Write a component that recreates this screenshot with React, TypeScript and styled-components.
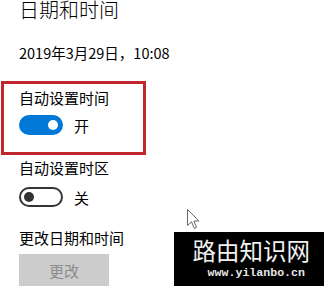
import React from 'react';
import styled, { createGlobalStyle } from 'styled-components';

const GlobalStyle = createGlobalStyle`
  html, body {
    margin: 0;
    padding: 0;
    background: #fff;
  }
  body {
    font-family: 'Noto Sans CJK SC', 'Noto Sans', sans-serif;
    color: #000;
  }
`;

const Page = styled.div`
  position: relative;
  width: 324px;
  height: 286px;
  overflow: hidden;
  padding-left: 19px;
  padding-top: 1px;
  box-sizing: border-box;
`;

const Title = styled.h1`
  margin: -3px 0 0;
  font-size: 20px;
  font-weight: 300;
  line-height: 24px;
  height: 24px;
`;

const DateLine = styled.div`
  margin-top: 21px;
  font-size: 14.5px;
  line-height: 20px;
`;

const Highlight = styled.div`
  margin: 18px 0 0 -18px;
  width: 145px;
  box-sizing: border-box;
  border: 3px solid #c1262d;
  padding: 4px 0 17px 15px;
`;

const Label = styled.div<{ $gap?: number }>`
  margin-top: ${(p) => p.$gap ?? 0}px;
  font-size: 15px;
  line-height: 20px;
`;

const ToggleRow = styled.div<{ $gap: number }>`
  display: flex;
  align-items: center;
  gap: 11px;
  margin-top: ${(p) => p.$gap}px;
  height: 20px;
  font-size: 15px;
`;

const Track = styled.div<{ $on: boolean }>`
  width: 44px;
  height: 20px;
  box-sizing: border-box;
  border-radius: 10px;
  border: 2px solid ${(p) => (p.$on ? '#0078d7' : '#333')};
  background: ${(p) => (p.$on ? '#0078d7' : '#fff')};
  display: flex;
  align-items: center;
  justify-content: ${(p) => (p.$on ? 'flex-end' : 'flex-start')};
  padding: 0 3px;
`;

const Knob = styled.div<{ $on: boolean }>`
  width: 10px;
  height: 10px;
  border-radius: 50%;
  background: ${(p) => (p.$on ? '#fff' : '#333')};
`;

const Button = styled.div`
  margin-top: 6px;
  width: 90px;
  height: 32px;
  background: #cccccc;
  color: #8c8c8c;
  font-size: 15px;
  display: flex;
  align-items: center;
  justify-content: center;
`;

const Watermark = styled.div`
  position: absolute;
  left: 174px;
  top: 232px;
  right: 0;
  bottom: 0;
  background: #000;
  color: #f2f2f2;
  display: flex;
  flex-direction: column;
  align-items: flex-end;
  padding-right: 14px;
`;

const WatermarkTitle = styled.div`
  font-size: 23.5px;
  line-height: 24px;
  height: 24px;
  margin-top: 6px;
`;

const WatermarkUrl = styled.div`
  font-family: 'Liberation Mono', 'DejaVu Sans Mono', monospace;
  font-size: 11.6px;
  font-weight: 700;
  line-height: 13px;
  margin-top: 4px;
  margin-right: 5px;
  color: #e8e8e8;
`;

const Cursor = styled.svg`
  position: absolute;
  left: 187px;
  top: 209px;
`;

function Toggle({ on, text, gap }: { on: boolean; text: string; gap: number }) {
  return (
    <ToggleRow $gap={gap}>
      <Track $on={on}>
        <Knob $on={on} />
      </Track>
      <span>{text}</span>
    </ToggleRow>
  );
}

export default function App(): JSX.Element {
  return (
    <>
      <GlobalStyle />
      <Page>
        <Title>日期和时间</Title>
        <DateLine>2019年3月29日，10:08</DateLine>
        <Highlight>
          <Label>自动设置时间</Label>
          <Toggle on text="开" gap={7} />
        </Highlight>
        <Label $gap={3}>自动设置时区</Label>
        <Toggle on={false} text="关" gap={9} />
        <Label $gap={21}>更改日期和时间</Label>
        <Button>更改</Button>
        <Cursor width="13" height="21" viewBox="0 0 13 21">
          <path
            d="M0.5 0.5 L0.5 16.5 L4.5 12.8 L7.3 19.5 L9.6 18.5 L6.9 12 L12 12 Z"
            fill="#fff"
            stroke="#666"
            strokeWidth="1"
            strokeLinejoin="round"
          />
        </Cursor>
        <Watermark>
          <WatermarkTitle>路由知识网</WatermarkTitle>
          <WatermarkUrl>www.yilanbo.cn</WatermarkUrl>
        </Watermark>
      </Page>
    </>
  );
}
